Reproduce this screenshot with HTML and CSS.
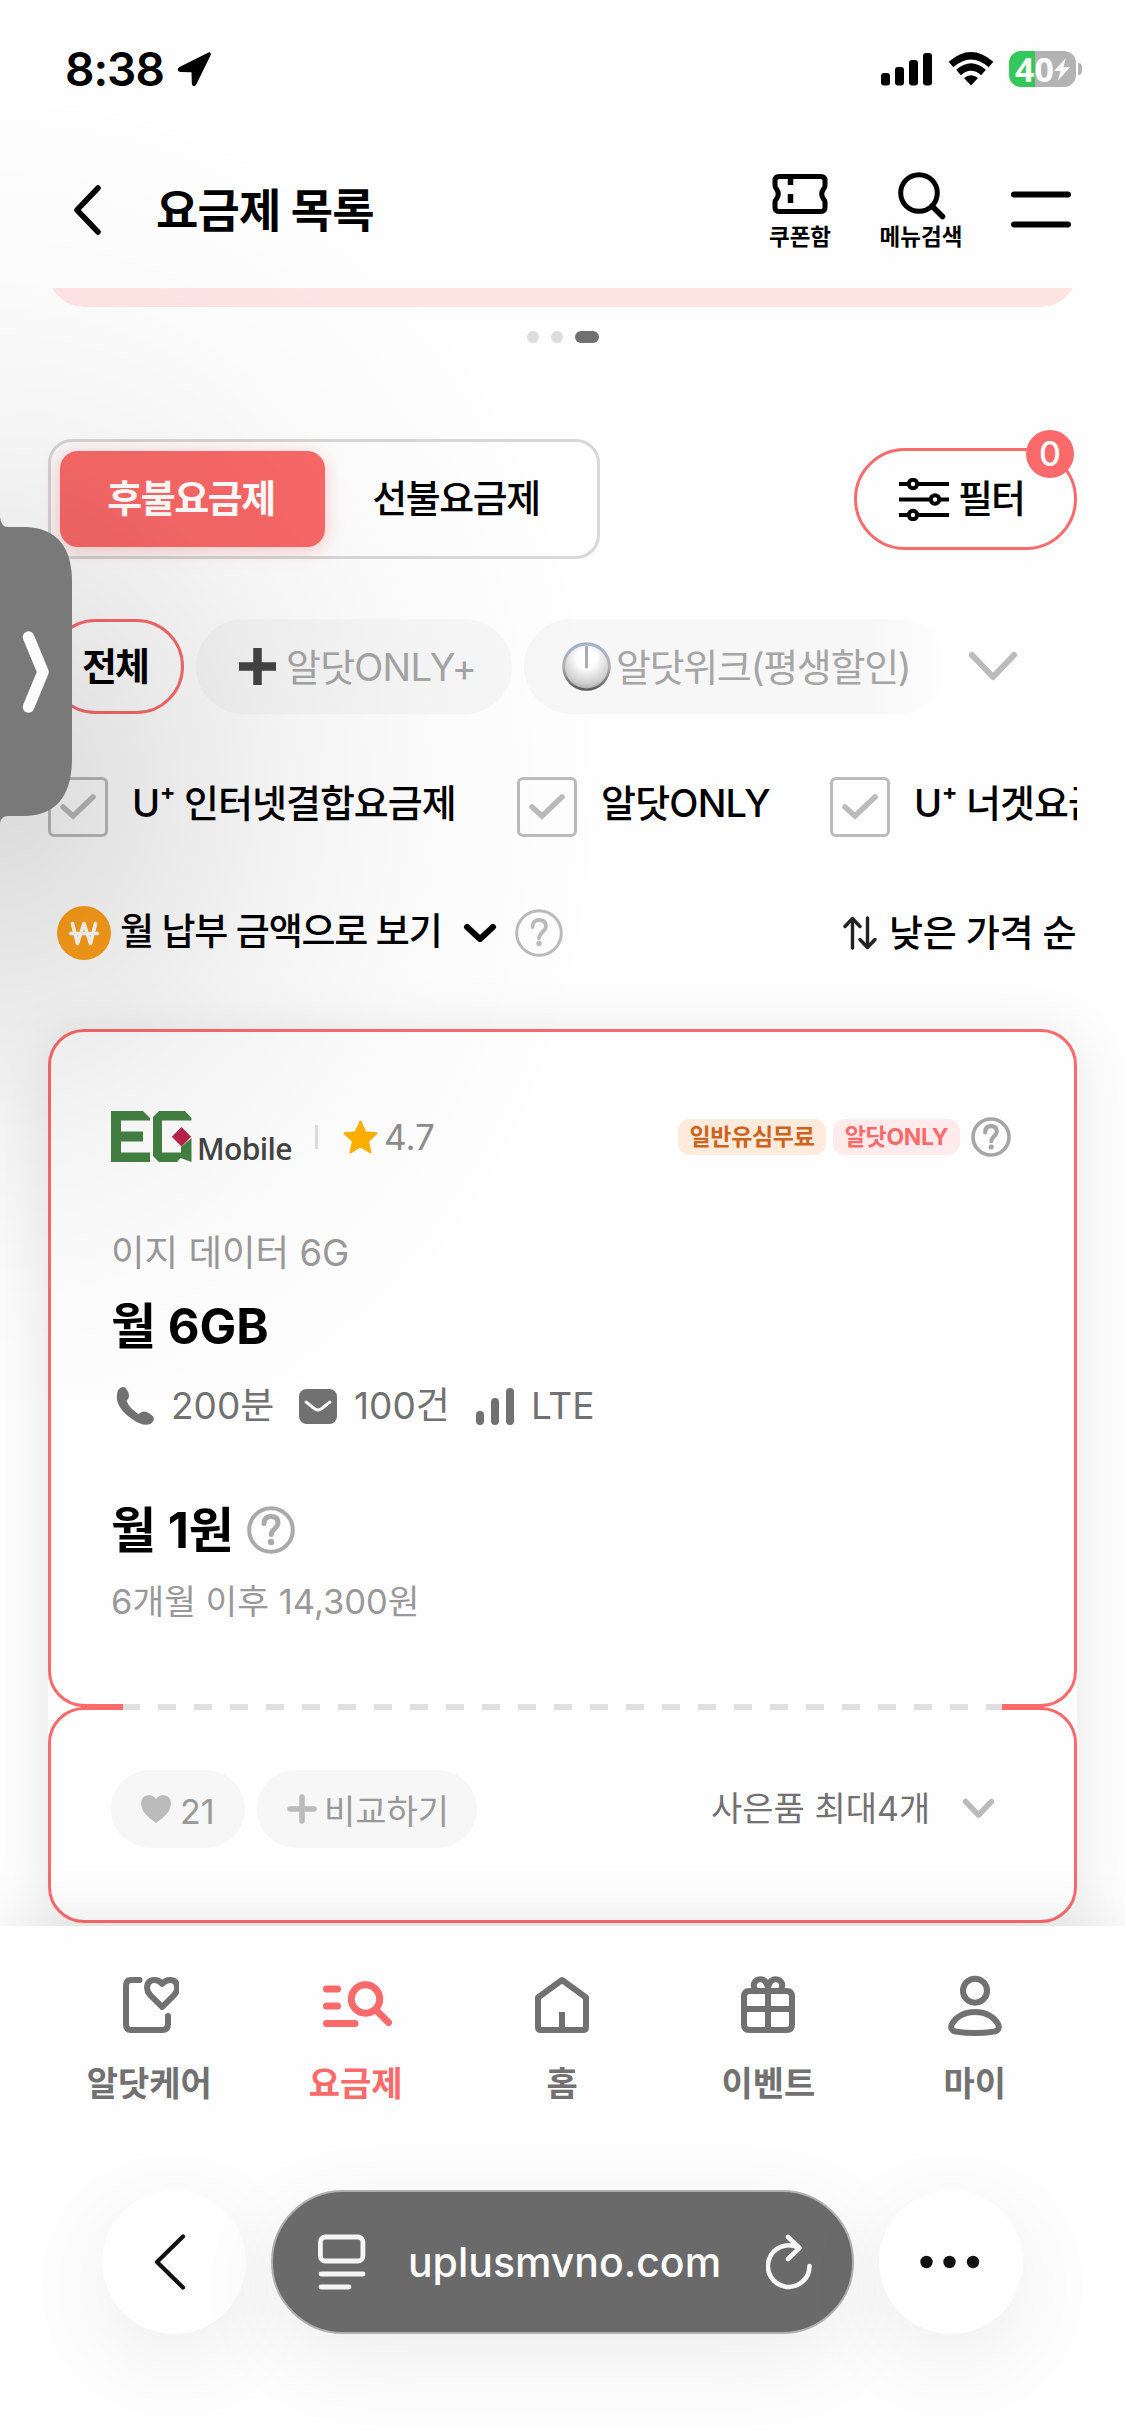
FILE: index.html
```html
<!DOCTYPE html>
<html lang="ko">
<head>
<meta charset="utf-8">
<title>요금제 목록</title>
<link rel="stylesheet" href="styles.css">
</head>
<body>
<div class="screen">
  <div class="status">
    <div class="status-left">
      <span class="time">8:38</span>
      <svg width="34" height="34" viewBox="0 0 34 34"><path d="M31 .7 2.500 15q-3 2-1 4.200 1 .8 2.500.8l10.500.3.3 11q0 2.200 1.500 2.700 2 .5 3.200-2L33.500 3.500Q34.500-1 31 .7z"/></svg>
    </div>
    <div class="status-right">
      <svg width="52" height="33" viewBox="0 0 52 33"><rect y="20" width="9" height="12.500" rx="3"/><rect x="14" y="14" width="9" height="18.500" rx="3"/><rect x="28" y="7" width="9" height="25.500" rx="3"/><rect x="42" width="9" height="32.500" rx="3"/></svg>
      <svg class="wifi" width="46" height="34" viewBox="0 0 46 34"><g fill="none" stroke="#000" stroke-width="7"><path d="M3 12.500Q23-5 43 12.500"/><path d="M10.500 20.500Q23 9.500 35.500 20.500"/></g><path d="M23 33.500 16 26q7-5.500 14 0z"/></svg>
      <div class="battery"><span>40</span><svg width="16" height="25" viewBox="0 0 17 24"><path fill="#fff" d="M12.500 0 0 13.500h7L4 24 17 9.500h-7z"/></svg></div>
      <i class="nub"></i>
    </div>
  </div>

  <header class="header">
    <svg class="back" width="28" height="50" viewBox="0 0 28 50"><path class="ln" stroke="#000" stroke-width="5.500" d="M25 3 4 25l21 22"/></svg>
    <h1>요금제 목록</h1>
    <div class="tool coupon">
      <svg width="56" height="40" viewBox="0 0 56 40"><path class="ln" stroke="#000" stroke-width="5" d="M7 2.500h42q4 0 4 4v5q0 2-1.500 3.500-3.500 5 0 10 1.500 1.500 1.500 3.500v5q0 4-4 4H7q-4 0-4-4v-5q0-2 1.500-3.500 3.500-5 0-10Q3 13.500 3 11.500v-5q0-4 4-4z"/><path stroke="#000" stroke-width="5.500" d="M18.500 2v9M18.500 20v9"/></svg>
      <span>쿠폰함</span>
    </div>
    <div class="tool find">
      <svg width="48" height="48" viewBox="0 0 48 48"><circle class="ln" stroke="#000" stroke-width="5" cx="21" cy="21" r="18.300"/><path class="ln" stroke="#000" stroke-width="5.500" d="m34 34 10.500 10.500"/></svg>
      <span>메뉴검색</span>
    </div>
    <svg class="menu" width="60" height="38" viewBox="0 0 60 38"><path class="ln" stroke="#000" stroke-width="6" d="M3 3.500h54M3 33.500h54"/></svg>
  </header>

  <div class="banner"><i></i></div>
  <div class="dots"><i></i><i></i><i class="on"></i></div>

  <div class="tabs-row">
    <div class="tabs"><span class="tab on">후불요금제</span><span class="tab">선불요금제</span></div>
    <div class="filter">
      <svg width="50" height="43" viewBox="0 0 50 43"><g stroke="#000" stroke-width="4" fill="#fff"><path d="M0 6h50M0 21.500h50M0 37h50"/><circle cx="14" cy="6" r="4.200"/><circle cx="36" cy="21.500" r="4.200"/><circle cx="14" cy="37" r="4.200"/></g></svg>
      <span>필터</span>
      <b class="count">0</b>
    </div>
  </div>

  <div class="chips">
    <div class="chip all">전체</div>
    <div class="chip only"><svg width="37" height="37" viewBox="0 0 37 37"><path stroke="#444" stroke-width="8.500" d="M18.500 0v37M0 18.500h37"/></svg><span>알닷ONLY+</span></div>
    <div class="chip week"><svg width="49" height="49" viewBox="0 0 49 49"><defs><radialGradient id="k" cx=".5" cy=".3" r=".75"><stop offset=".3" stop-color="#fff"/><stop offset=".8" stop-color="#ccc"/><stop offset="1" stop-color="#999"/></radialGradient><linearGradient id="r" x2="0" y2="1"><stop stop-color="#a3b3cc"/><stop offset=".5" stop-color="#b0b0b0"/><stop offset="1" stop-color="#555"/></linearGradient></defs><circle cx="24.500" cy="24.500" r="24.300" fill="url(#r)"/><circle cx="24.500" cy="25" r="21.500" fill="url(#k)"/><path d="M24.500 5v20" stroke="#aab" stroke-width="3" stroke-linecap="round"/></svg><span>알닷위크(평생할인)</span></div>
    <svg class="more" width="50" height="31" viewBox="0 0 50 31"><path class="ln" stroke="#bbb" stroke-width="6" stroke-linejoin="miter" d="M4 4l21 22L46 4"/></svg>
  </div>

  <div class="checks">
    <div class="check c1"><i><svg width="36" height="26" viewBox="0 0 36 26"><path class="ln tick" d="M3 13l10 9L33 3"/></svg></i><span>U⁺ 인터넷결합요금제</span></div>
    <div class="check c2"><i><svg width="36" height="26" viewBox="0 0 36 26"><path class="ln tick" d="M3 13l10 9L33 3"/></svg></i><span>알닷ONLY</span></div>
    <div class="check c3"><i><svg width="36" height="26" viewBox="0 0 36 26"><path class="ln tick" d="M3 13l10 9L33 3"/></svg></i><span>U⁺ 너겟요금제</span></div>
  </div>

  <div class="sort">
    <svg class="coin" width="54" height="54" viewBox="0 0 54 54"><circle cx="27" cy="27" r="27" fill="#ff9f1a"/><path class="ln" stroke="#fff" stroke-width="3.600" d="m15.500 17.500 5 20 6.500-20 6.500 20 5-20M13.500 27.500h27"/></svg>
    <span class="view">월 납부 금액으로 보기</span>
    <svg class="v" width="34" height="21" viewBox="0 0 34 21"><path class="ln" stroke="#000" stroke-width="6" stroke-linejoin="miter" d="m4 4 13 12L30 4"/></svg>
    <svg width="48" height="48" viewBox="0 0 48 48"><circle class="ln" stroke="#bbb" stroke-width="3" cx="24" cy="24" r="22.300"/><path class="ln" stroke="#bbb" stroke-width="3.800" d="M17.500 18q0-7 6.700-7t6.700 6.300c0 5.700-6.900 6-6.900 12"/><circle cx="24" cy="34.500" r="2.700" fill="#bbb"/></svg>
    <svg class="ud" width="34" height="34" viewBox="0 0 34 34"><path class="ln" stroke="#222" stroke-width="3.400" d="M9.500 32V3M2 10.500l7.500-8 7.500 8M24.500 2v29M17 23.500l7.500 8 7.500-8"/></svg>
    <span class="low">낮은 가격 순</span>
  </div>

  <div class="cards">
    <section class="card plan">
      <div class="plan-head">
        <svg class="eg" width="82" height="52" viewBox="0 0 82 52"><path fill="#438042" d="M0 0h32l7 7v2.500H10v11h22v10H10v11h29V51H0zM48 0h26l6.500 7v2.500H51v32h19V36l10.500-9v24L69.500 47 66 51H48l-6-6V6z"/><path fill="#b9234a" d="m70.500 16 9.700 9.700-9.700 9.700-9.700-9.700z"/></svg>
        <span class="mobile">Mobile</span>
        <i class="bar"></i>
        <svg class="star" width="36" height="34" viewBox="0 0 36 34"><path fill="#ffb000" stroke="#ffb000" stroke-width="2" stroke-linejoin="round" d="m17.500 1.500 4.800 10.700 11.200 1-8.500 8 2.500 11.300-10-6-10 6L10 21.200l-8.500-8 11.200-1z"/></svg>
        <span class="score">4.7</span>
        <span class="tag orange">일반유심무료</span>
        <span class="tag pink">알닷ONLY</span>
        <svg width="40" height="40" viewBox="0 0 48 48"><circle class="ln" stroke="#a6a6a6" stroke-width="4.400" cx="24" cy="24" r="21.600"/><path class="ln" stroke="#a6a6a6" stroke-width="5" d="M17 18.500q0-7.500 7-7.500t7 6.500c0 5.500-6.700 6-6.700 11.500"/><circle cx="24.200" cy="36" r="3.100" fill="#a6a6a6"/></svg>
      </div>
      <div class="name">이지 데이터 6G</div>
      <div class="big data">월 6GB</div>
      <div class="specs">
        <svg width="38" height="38" viewBox="0 0 38 38"><path fill="#717171" d="M2 3Q6-1.500 9.500 1q4 4.500 3.500 8.500 0 1.500-2.500 4.500 3.500 8 12 13 3.500-3 5.500-2.500 5 .5 9 5 2.500 4-2 7-7 4-19-4.500Q-3.500 18.500 2 3z"/></svg>
        <span class="s1">200분</span>
        <svg width="38" height="35" viewBox="0 0 38 35"><rect width="38" height="35" rx="7.500" fill="#717171"/><path class="ln" stroke="#fff" stroke-width="3" d="m7 13 9 7q3 2 6 0l9-7"/></svg>
        <span class="s2">100건</span>
        <svg width="38" height="37" viewBox="0 0 38 37"><g fill="#717171"><rect y="23" width="8" height="14" rx="4"/><rect x="15" y="10" width="8" height="27" rx="4"/><rect x="30" width="8" height="37" rx="4"/></g></svg>
        <span class="s3">LTE</span>
      </div>
      <div class="price"><span class="big">월 1원</span><svg width="48" height="48" viewBox="0 0 48 48"><circle class="ln" stroke="#aaa" stroke-width="4" cx="24" cy="24" r="21.800"/><path class="ln" stroke="#aaa" stroke-width="5" d="M17 17.500q0-7 7-7t7 6.500c0 5.500-6.700 6-6.700 11.500"/><circle cx="24" cy="36" r="3.200" fill="#aaa"/></svg></div>
      <div class="after">6개월 이후 14,300원</div>
      <i class="dash"></i>
    </section>
    <section class="card actions">
      <div class="pill like"><svg width="30" height="28" viewBox="0 0 30 28"><path fill="#bbb" d="M15 28Q0 18 0 9 0 1 7.500 0 12 0 15 4q3-4 7.500-4Q30 1 30 9q0 9-15 19z"/></svg><span>21</span></div>
      <div class="pill cmp"><svg width="30" height="30" viewBox="0 0 30 30"><path class="ln" stroke="#bbb" stroke-width="5.500" d="M15 3v24M3 15h24"/></svg><span>비교하기</span></div>
      <span class="gift">사은품 최대4개</span>
      <svg class="gv" width="33" height="22" viewBox="0 0 33 22"><path class="ln" stroke="#bbb" stroke-width="5.500" stroke-linejoin="miter" d="m3.500 3.500 13 13.500 13-13.500"/></svg>
    </section>
  </div>

  <nav class="nav">
    <a><svg width="60" height="62" viewBox="0 0 60 62"><g class="ln g"><path d="M20.500 5H12q-5 0-5 6v38q0 6 5 6h31q6 0 6-6v-8"/><path d="M43.200 32 31 19.800q-2.900-3.300-2.900-6.500 0-8.300 7.400-8.300 4.500 0 7.700 3.800Q46.500 5 51 5q7.200 0 7.200 8.300 0 3.200-2.900 6.500z"/></g></svg><span>알닷케어</span></a>
    <a class="on"><svg width="72" height="62" viewBox="0 0 72 62"><g class="ln" stroke="#fa6a6a" stroke-width="7"><path d="M6.500 14H17.500M6.500 31H17.500M6.500 48.500H35"/><circle cx="45.500" cy="24" r="14.200"/><path d="m56.500 35.500 12 12"/></g></svg><span>요금제</span></a>
    <a><svg width="60" height="62" viewBox="0 0 60 62"><path class="ln g" d="M6 22.500 30 5l24 17.500V52q0 3-3 3H9q-3 0-3-3z"/><path stroke="#717171" stroke-width="6" d="M30 37v18"/></svg><span>홈</span></a>
    <a><svg width="60" height="62" viewBox="0 0 60 62"><path class="ln g" d="M11.500 16h37q5.500 0 5.500 5.500v28q0 5.500-5.500 5.500h-37Q6 55 6 49.500v-28Q6 16 11.500 16zM30 16v39M6 34h48M18 16q-5-7 1-11 9-3 11 8 2-11 11-8 6 4 1 11"/></svg><span>이벤트</span></a>
    <a><svg width="60" height="62" viewBox="0 0 60 62"><g class="ln g"><circle cx="30" cy="15.700" r="12"/><path d="M30 37c12 0 20 6 23 12 2 4 0 7-4 7.600-12 1.900-26 1.900-38 0-4-.6-6-3.600-4-7.600 3-6 11-12 23-12z"/></g></svg><span>마이</span></a>
  </nav>

  <div class="browser">
    <div class="round"><svg width="34" height="56" viewBox="0 0 34 56"><path class="ln" stroke="#111" stroke-width="4.200" d="M30 2.500 4 28l26 25.500"/></svg></div>
    <div class="url">
      <svg width="48" height="56" viewBox="0 0 48 56"><g class="ln" stroke="#f5f5f5" stroke-width="4.800"><rect x="2.400" y="3" width="42.500" height="24" rx="5"/><path d="M3 40h42M3 53h28"/></g></svg>
      <span>uplusmvno.com</span>
      <svg width="46" height="56" viewBox="0 0 46 56"><path class="ln" stroke="#f5f5f5" stroke-width="4.600" d="M43.500 32A20.800 20.800 0 1 1 32 13.500M22 3l11.500 11L22 25"/></svg>
    </div>
    <div class="round"><svg width="62" height="14" viewBox="0 0 62 14"><g fill="#111"><circle cx="7.500" cy="7" r="6.200"/><circle cx="30.500" cy="7" r="6.200"/><circle cx="54" cy="7" r="6.200"/></g></svg></div>
  </div>

  <div class="haze"></div>
  <svg class="handle" width="76" height="306" viewBox="0 0 76 306"><path fill="#7a7979" d="M0 0q1 10 8 10h18Q72 12 72 65v176q0 56-46 58H8q-7 0-8 7z"/><path class="ln" stroke="#fff" stroke-width="11.500" d="M28.500 120 43 155l-14.500 35"/></svg>
</div>
</body>
</html>
```
FILE: styles.css
```css
* { box-sizing: border-box; }
body { margin: 0; background: #fefefe; }
.screen {
  position: relative; width: 1125px; height: 2436px; overflow: hidden;
  display: flex; flex-direction: column;
  font-family: Inter, "Noto Sans CJK KR", sans-serif; font-size: 38px; color: #000;
  line-height: 1; white-space: nowrap;
}
svg { display: block; flex: none; }
span, b, h1 { flex: none; }
.ln { fill: none; stroke-linecap: round; stroke-linejoin: round; }
.g { stroke: #717171; stroke-width: 6; }
.tick { stroke: #bbb; stroke-width: 5.500; stroke-linejoin: miter; }

.status { height: 138px; display: flex; justify-content: space-between; padding: 0 43px 0 65px; align-items: center; }
.status-left, .status-right { display: flex; align-items: center; }
.time { font-size: 46px; font-weight: 600; width: 112px; letter-spacing: -1px; }
.wifi { margin: 0 15px; }
.battery { width: 67px; height: 36px; border-radius: 12px; background: linear-gradient(90deg, #34c759 26px, #b3b3b3 26px); display: flex; align-items: center; justify-content: center; color: #fff; font-size: 34px; font-weight: 700; }
.battery span { font-family: "Noto Sans", sans-serif; letter-spacing: 0; }
.nub { width: 4px; height: 12px; background: #b3b3b3; border-radius: 0 4px 4px 0; margin-left: 2px; }

.header { height: 150px; display: flex; padding: 0 54px 0 73px; align-items: flex-start; }
.back { margin-top: 47px; }
.header h1 { margin: 49px 0 0 55px; font-size: 46px; font-weight: 700; letter-spacing: -.8px; line-height: 46px; width: 614px; }
.tool { display: flex; flex-direction: column; align-items: center; font-size: 22.500px; font-weight: 700; width: 60px; }
.coupon { padding-top: 36px; }
.coupon span { margin-top: 12px; }
.find { padding-top: 34px; margin-left: 61px; }
.find svg { margin-left: 2px; }
.find span { margin-top: 6px; }
.menu { margin: 53px 0 0 60px; }

.banner { height: 19px; overflow: hidden; display: flex; align-items: flex-end; padding: 0 48px; position: relative; }
.banner i { flex: 1; height: 80px; border-radius: 36px; background: #ffe4e4; }
.dots { display: flex; gap: 12px; justify-content: center; margin-top: 24px; height: 12px; }
.dots i { width: 12px; height: 12px; border-radius: 6px; background: #ddd; }
.dots .on { width: 24px; background: #707070; }

.tabs-row { margin-top: 96px; padding: 0 48px; height: 120px; display: flex; justify-content: space-between; align-items: center; }
.tabs { width: 552px; height: 120px; border: 3px solid #d8d8d8; border-radius: 24px; padding: 9px; display: flex; }
.tab { width: 265px; height: 96px; border-radius: 18px; display: flex; align-items: center; justify-content: center; font-weight: 500; font-size: 38px; letter-spacing: -1.500px; padding: 0 3px 2px 0; }
.tab.on { background: #fa6868; color: #fff; font-weight: 700; box-shadow: 0 3px 18px rgba(250,104,104,.35); }
.filter { position: relative; width: 223px; height: 102px; border: 3px solid #fa6a6a; border-radius: 51px; display: flex; align-items: center; padding-left: 42px; gap: 9px; font-size: 38px; letter-spacing: -2px; font-weight: 500; }
.filter span { margin-top: -2px; }
.count { position: absolute; right: 0; top: -21px; width: 48px; height: 48px; border-radius: 50%; background: #fa6a6a; color: #fff; font-size: 34px; font-weight: 500; line-height: 48px; letter-spacing: 0; text-align: center; }

.chips { margin-top: 60px; margin-left: 48px; height: 95px; display: flex; gap: 12px; align-items: center; font-size: 38px; }
.chip { height: 95px; border-radius: 48px; display: flex; align-items: center; background: #f7f7f7; color: #a5a5a5; }
.chip.all { width: 136px; background: none; border: 3px solid #fa6a6a; color: #000; font-weight: 600; padding: 0 0 2px 31px; letter-spacing: -2px; }
.only { width: 316px; padding-left: 43px; gap: 10px; letter-spacing: -.8px; }
.week { width: 423px; padding-left: 38px; gap: 5px; letter-spacing: -1.300px; background: linear-gradient(90deg, #f7f7f7 82%, #fefefe 99%); }
.more { margin-left: 9px; }

.checks { margin: 63px 48px 0; height: 60px; display: flex; overflow: hidden; }
.check { display: flex; gap: 24px; align-items: center; flex: none; font-size: 38px; font-weight: 500; letter-spacing: -1px; }
.check i { width: 60px; height: 60px; border: 3px solid #bbb; border-radius: 6px; display: flex; align-items: center; justify-content: center; }
.check span { margin-top: -8px; }
.c1 { width: 469px; }
.c2 { width: 313px; }
.c2 span { letter-spacing: -.8px; }

.sort { margin-top: 69px; padding-left: 57px; height: 54px; display: flex; align-items: center; font-size: 37px; font-weight: 500; }
.view { margin: -3px 0 0 9px; width: 343px; letter-spacing: -1.200px; }
.v { margin-right: 18px; }
.ud { margin-left: 280px; }
.low { margin: 1px 0 0 12px; letter-spacing: -.4px; }

.cards { margin: 69px 48px 0; border-radius: 36px; box-shadow: 0 6px 60px rgba(0,0,0,.1); flex: none; }
.card { border: 3px solid #fa6a6a; border-radius: 36px; background: #fefefe; }
.plan { height: 678px; padding: 78px 60px 0; position: relative; }
.plan-head { display: flex; height: 54px; align-items: center; }
.mobile { font-family: "Open Sans", sans-serif; font-weight: 600; font-size: 30px; letter-spacing: -.6px; color: #444; margin: 24px 0 0 4px; width: 96px; }
.bar { width: 3px; height: 24px; background: #ddd; margin: 0 25px 0 22px; }
.score { color: #8c8c8c; margin-left: 5px; font-size: 35px; width: 294px; }
.tag { height: 36px; border-radius: 12px; font-size: 23px; font-weight: 700; display: flex; align-items: center; justify-content: center; letter-spacing: -.3px; }
.orange { width: 148px; background: #ffebdc; color: #cd641e; }
.pink { width: 127px; background: #ffebeb; color: #fa6a6a; margin: 0 11px 0 7px; }
.name { margin-top: 69px; font-size: 36.500px; line-height: 40px; color: #999; }
.big { font-size: 49px; font-weight: 700; line-height: 50px; }
.data { margin-top: 29px; }
.specs { display: flex; align-items: center; margin: 34px 0 0 5px; height: 40px; font-size: 37px; color: #717171; }
.specs span { margin-top: -2px; }
.s1 { margin-left: 17px; width: 128px; }
.s2 { margin-left: 17px; width: 122px; }
.s3 { margin-left: 17px; }
.price { display: flex; align-items: center; gap: 13px; margin-top: 79px; height: 50px; }
.price .big { margin-top: 2px; }
.after { margin-top: 28px; font-size: 34.500px; line-height: 38px; color: #999; }
.dash { position: absolute; z-index: 1; left: 30px; right: 30px; bottom: -6px; height: 6px; background:
  linear-gradient(#fa6a6a, #fa6a6a) 0 0 / 42px 6px no-repeat,
  linear-gradient(#fa6a6a, #fa6a6a) 100% 0 / 42px 6px no-repeat,
  repeating-linear-gradient(90deg, #e0e0e0 0 18px, #fefefe 18px 36px) 41px 0 no-repeat; }
.actions { height: 216px; padding: 60px 60px 0; display: flex; font-size: 34px; color: #999; }
.pill { height: 78px; border-radius: 39px; background: #f7f7f7; display: flex; align-items: center; padding-left: 30px; gap: 9px; }
.pill span { margin-top: 5px; }
.like { width: 134px; }
.cmp { width: 220px; margin-left: 12px; gap: 7px; }
.gift { margin: 22px 0 0 234px; width: 251px; color: #717171; }
.gv { margin-top: 28px; }

.nav { position: relative; height: 208px; margin-top: 3px; padding: 49px 47px 0 46px; display: flex; background: #fefefe; color: #717171; box-shadow: 0 0 60px rgba(0,0,0,.1); clip-path: inset(-150px 0 0 0); font-size: 34px; font-weight: 600; flex: none; }
.nav a { flex: 1; display: flex; flex-direction: column; align-items: center; }
.nav span { margin-top: 30px; }
.nav .on { color: #fa6a6a; }

.browser { display: flex; padding: 56px 102px 0; gap: 25px; flex: none; position: relative; }
.round { width: 144px; height: 144px; border-radius: 50%; background: #fefefe; display: flex; align-items: center; justify-content: center; box-shadow: 0 24px 90px rgba(0,0,0,.07); }
.round svg { margin-right: 2px; }
.round:first-child svg { margin-right: 9px; }
.url { width: 583px; height: 144px; border-radius: 72px; background: #6a6a6a; border: 2px solid #b0b0b0; display: flex; align-items: center; justify-content: space-between; padding: 0 40px 0 45px; color: #fff; font-size: 41px; font-weight: 500; box-shadow: 0 24px 90px rgba(0,0,0,.07); }
.url span { margin-left: -3px; }

.haze { position: absolute; left: 0; top: 0; width: 700px; height: 1400px; pointer-events: none; background: radial-gradient(ellipse 620px 720px at 0 790px, rgba(0,0,0,.14), rgba(0,0,0,.085) 25%, rgba(0,0,0,.038) 48%, rgba(0,0,0,.01) 72%, transparent); }
.handle { position: absolute; left: 0; top: 517px; }
```
